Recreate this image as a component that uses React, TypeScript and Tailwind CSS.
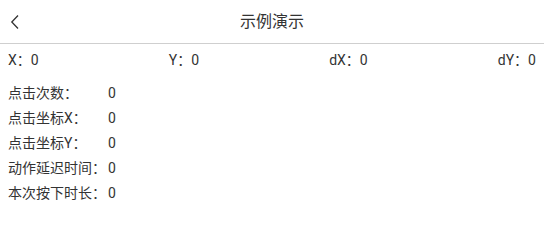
const rows = [
  { label: "点击次数：", value: 0 },
  { label: "点击坐标X：", value: 0 },
  { label: "点击坐标Y：", value: 0 },
  { label: "动作延迟时间：", value: 0 },
  { label: "本次按下时长：", value: 0 },
];

export default function App() {
  return (
    <div
      className="min-h-screen bg-white text-[#333]"
      style={{ fontFamily: '"Roboto", "Noto Sans CJK SC", sans-serif' }}
    >
      {/* Header */}
      <div className="relative flex h-[44px] items-center justify-center border-b border-[#cfcfcf]">
        <button className="absolute left-[6px] top-1/2 -translate-y-1/2 p-1">
          <svg width="10" height="16" viewBox="0 0 10 16" fill="none">
            <path d="M8 1.5L1.8 8L8 14.5" stroke="#333" strokeWidth="1.3" />
          </svg>
        </button>
        <span className="text-[16px]">示例演示</span>
      </div>

      {/* Coordinates */}
      <div className="flex justify-between px-[8px] pt-[7px] text-[14px] leading-[18px]">
        <span>X：0</span>
        <span>Y：0</span>
        <span>dX：0</span>
        <span>dY：0</span>
      </div>

      {/* Stats */}
      <div className="flex flex-col px-[8px] pt-[12px] text-[14px]">
        {rows.map((r) => (
          <div key={r.label} className="flex h-[25px] items-center">
            <span className="w-[100px]">{r.label}</span>
            <span>{r.value}</span>
          </div>
        ))}
      </div>
    </div>
  );
}
